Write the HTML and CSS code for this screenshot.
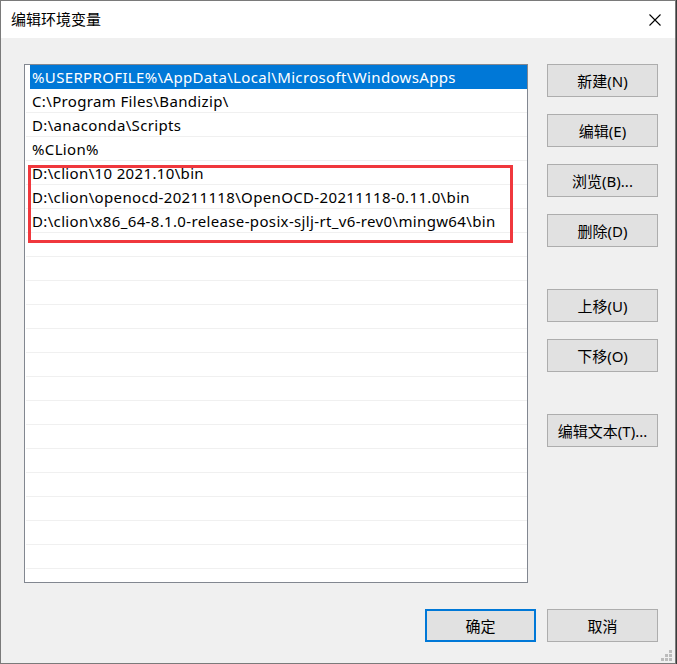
FILE: index.html
```html
<!DOCTYPE html>
<html lang="zh-CN">
<head>
<meta charset="utf-8">
<title>编辑环境变量</title>
<link rel="stylesheet" href="styles.css">
</head>
<body>
<div class="window">
  <div class="titlebar">
    <span class="title">编辑环境变量</span>
    <span class="close">
      <svg width="12" height="12" viewBox="0 0 12 12"><path d="M0.5 0.5 L11.5 11.5 M11.5 0.5 L0.5 11.5" stroke="#000" stroke-width="1.1" fill="none"/></svg>
    </span>
  </div>
  <div class="content">
    <div class="main">
      <div class="list">
        <div class="row selected">%USERPROFILE%\AppData\Local\Microsoft\WindowsApps</div>
        <div class="row">C:\Program Files\Bandizip\</div>
        <div class="row">D:\anaconda\Scripts</div>
        <div class="row">%CLion%</div>
        <div class="row">D:\clion\10 2021.10\bin</div>
        <div class="row">D:\clion\openocd-20211118\OpenOCD-20211118-0.11.0\bin</div>
        <div class="row">D:\clion\x86_64-8.1.0-release-posix-sjlj-rt_v6-rev0\mingw64\bin</div>
        <div class="row"></div>
        <div class="row"></div>
        <div class="row"></div>
        <div class="row"></div>
        <div class="row"></div>
        <div class="row"></div>
        <div class="row"></div>
        <div class="row"></div>
        <div class="row"></div>
        <div class="row"></div>
        <div class="row"></div>
        <div class="row"></div>
        <div class="row"></div>
        <div class="row"></div>
        <div class="row"></div>
        <div class="highlight"></div>
      </div>
      <div class="side">
        <button class="btn">新建(N)</button>
        <button class="btn">编辑(E)</button>
        <button class="btn">浏览(B)...</button>
        <button class="btn">删除(D)</button>
        <button class="btn gap">上移(U)</button>
        <button class="btn">下移(O)</button>
        <button class="btn gap">编辑文本(T)...</button>
      </div>
    </div>
    <div class="footer">
      <button class="btn primary">确定</button>
      <button class="btn">取消</button>
    </div>
    <div class="grip">
      <i class="d1"></i><i class="d2"></i><i class="d3"></i><i class="d4"></i><i class="d5"></i><i class="d6"></i>
    </div>
  </div>
</div>
</body>
</html>
```
FILE: styles.css
```css
html, body {
  margin: 0;
  padding: 0;
}
body {
  background: #3b3b3b;
  width: 677px;
  height: 664px;
  overflow: hidden;
  font-family: "Noto Sans", "Noto Sans CJK SC", sans-serif;
  font-size: 15px;
  color: #000;
}
.window {
  box-sizing: border-box;
  width: 676px;
  height: 664px;
  border: 1px solid #7a7a7a;
  display: flex;
  flex-direction: column;
  background: #f0f0f0;
}
.titlebar {
  height: 37px;
  background: #fff;
  display: flex;
  align-items: center;
  justify-content: space-between;
  padding: 0 14px 0 10px;
  flex: none;
}
.title {
  font-family: "Noto Sans CJK SC", sans-serif;
  font-size: 15px;
  line-height: 20px;
  margin-top: -1px;
}
.close {
  display: flex;
  width: 12px;
  height: 12px;
}
.content {
  flex: 1;
  position: relative;
  padding: 26px 17px 0 23px;
  display: flex;
  flex-direction: column;
}
.main {
  display: flex;
  gap: 19px;
}
.list {
  position: relative;
  box-sizing: border-box;
  width: 504px;
  height: 519px;
  border: 1px solid #828790;
  background: #fff;
  overflow: hidden;
}
.row {
  box-sizing: border-box;
  height: 24px;
  margin-left: 1px;
  border-bottom: 1px solid #f0f0f0;
  padding-left: 6px;
  line-height: 25px;
  letter-spacing: 0.35px;
  white-space: nowrap;
}
.row.selected {
  margin-left: 5px;
  padding-left: 2px;
  background: #0078d7;
  color: #fff;
  border-bottom-color: #0078d7;
}
.highlight {
  position: absolute;
  left: 3px;
  top: 100px;
  width: 485px;
  height: 78px;
  box-sizing: border-box;
  border: 3px solid #f0383d;
}
.side {
  display: flex;
  flex-direction: column;
  gap: 17px;
}
.btn {
  box-sizing: border-box;
  width: 111px;
  height: 33px;
  background: #e1e1e1;
  border: 1px solid #adadad;
  font-family: "Noto Sans", "Noto Sans CJK SC", sans-serif;
  font-size: 15px;
  color: #000;
  padding: 0;
  margin: 0;
}
.btn.gap {
  margin-top: 25px;
}
.btn.primary {
  border: 2px solid #0078d7;
}
.footer {
  display: flex;
  justify-content: flex-end;
  gap: 11px;
  margin-top: 26px;
}
.grip {
  position: absolute;
  right: 3px;
  bottom: 2px;
  width: 11px;
  height: 11px;
}
.grip i {
  position: absolute;
  width: 3px;
  height: 3px;
  background: #bcbcbc;
}
.grip .d1 { left: 8px; top: 0; }
.grip .d2 { left: 4px; top: 4px; }
.grip .d3 { left: 8px; top: 4px; }
.grip .d4 { left: 0; top: 8px; }
.grip .d5 { left: 4px; top: 8px; }
.grip .d6 { left: 8px; top: 8px; }
```
